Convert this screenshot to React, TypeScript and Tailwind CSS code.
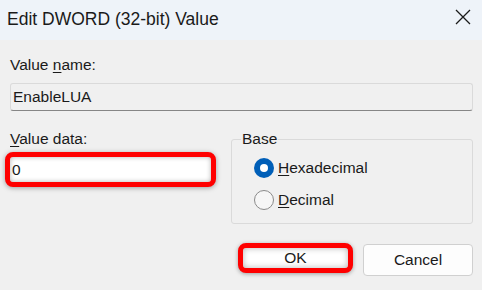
import React from 'react';

// Windows registry "Edit DWORD" dialog, with the red call-out boxes from the screenshot
const font = { fontFamily: '"Liberation Sans", Arial, sans-serif' };

function Radio({ checked, label, hotkey }: { checked?: boolean; label: string; hotkey: string }) {
  const rest = label.slice(hotkey.length);
  return (
    <div className="flex items-center h-[20px]">
      {checked ? (
        <span className="w-[20px] h-[20px] rounded-full bg-[#005fb8] flex items-center justify-center">
          <span className="w-[8px] h-[8px] rounded-full bg-white" />
        </span>
      ) : (
        <span className="w-[20px] h-[20px] rounded-full border border-[#8a8a8a] bg-[#f6f6f6]" />
      )}
      <span className="ml-[4px] text-[15.5px] leading-[18px] text-[#1a1a1a]">
        <u className="underline-offset-[2px]">{hotkey}</u>
        {rest}
      </span>
    </div>
  );
}

export default function App() {
  return (
    <div className="w-[482px] h-[290px] bg-[#f0f0f0] overflow-hidden text-[#1a1a1a]" style={font}>
      {/* title bar */}
      <div className="h-[40px] bg-[#eef3f9] flex items-center justify-between pl-[7px] pr-[11px]">
        <span className="text-[17.5px] leading-[20px] -mt-[3px] text-[#1a1a1a]">Edit DWORD (32-bit) Value</span>
        <svg width="16" height="16" viewBox="0 0 16 16" className="-mt-[6px]">
          <path d="M1 1 L15 15 M15 1 L1 15" stroke="#1b1b1b" strokeWidth="1.3" fill="none" />
        </svg>
      </div>

      <div className="pl-[10px] pr-[9px]">
        {/* value name */}
        <div className="pt-[16px] text-[15.5px] leading-[18px]">
          Value <u className="underline-offset-[2px]">n</u>ame:
        </div>
        <div className="mt-[9px] h-[28px] rounded-[3px] border border-[#dadada] border-b-[#868686] bg-[#f0f0f0] flex items-center pl-[2px] text-[15.5px] leading-[18px]">
          EnableLUA
        </div>

        <div className="mt-[19px] flex">
          {/* value data */}
          <div className="w-[206px] flex flex-col">
            <div className="text-[15.5px] leading-[18px]">
              <u className="underline-offset-[2px]">V</u>alue data:
            </div>
            <div className="mt-[4px] -ml-[5px] w-[211px] h-[35px] rounded-[8px] border-[5px] border-[#ff0000] bg-white shadow-[0_1px_5px_rgba(0,0,0,0.35)] overflow-hidden">
              <div className="w-full h-full rounded-[3px] shadow-[inset_0_0_5px_rgba(0,0,0,0.3)] flex items-center pl-[2px] text-[15.5px] leading-[18px]">
                0
              </div>
            </div>
          </div>

          {/* base */}
          <fieldset className="ml-[15px] flex-1 h-[94px] border border-[#dadada] rounded-[3px]">
            <legend className="ml-[9px] px-[1px] text-[15.5px] leading-[18px]">Base</legend>
            <div className="mt-[10px] pl-[22px] flex flex-col gap-[12px]">
              <Radio checked label="Hexadecimal" hotkey="H" />
              <Radio label="Decimal" hotkey="D" />
            </div>
          </fieldset>
        </div>

        {/* buttons */}
        <div className="mt-[20px] flex justify-end items-start gap-[10px]">
          <div className="-mt-[1px] w-[115px] h-[30px] rounded-[8px] border-[5px] border-[#ff0000] bg-white shadow-[0_1px_4px_rgba(0,0,0,0.35)] overflow-hidden">
            <div className="w-full h-full rounded-[3px] shadow-[inset_0_0_6px_rgba(0,0,0,0.3)] flex items-center justify-center text-[15.5px] leading-[18px]">
              OK
            </div>
          </div>
          <button className="w-[110px] h-[32px] rounded-[4px] border border-[#d0d0d0] bg-[#fdfdfd] text-[15.5px] leading-[18px] text-[#1a1a1a]">
            Cancel
          </button>
        </div>
      </div>
    </div>
  );
}
